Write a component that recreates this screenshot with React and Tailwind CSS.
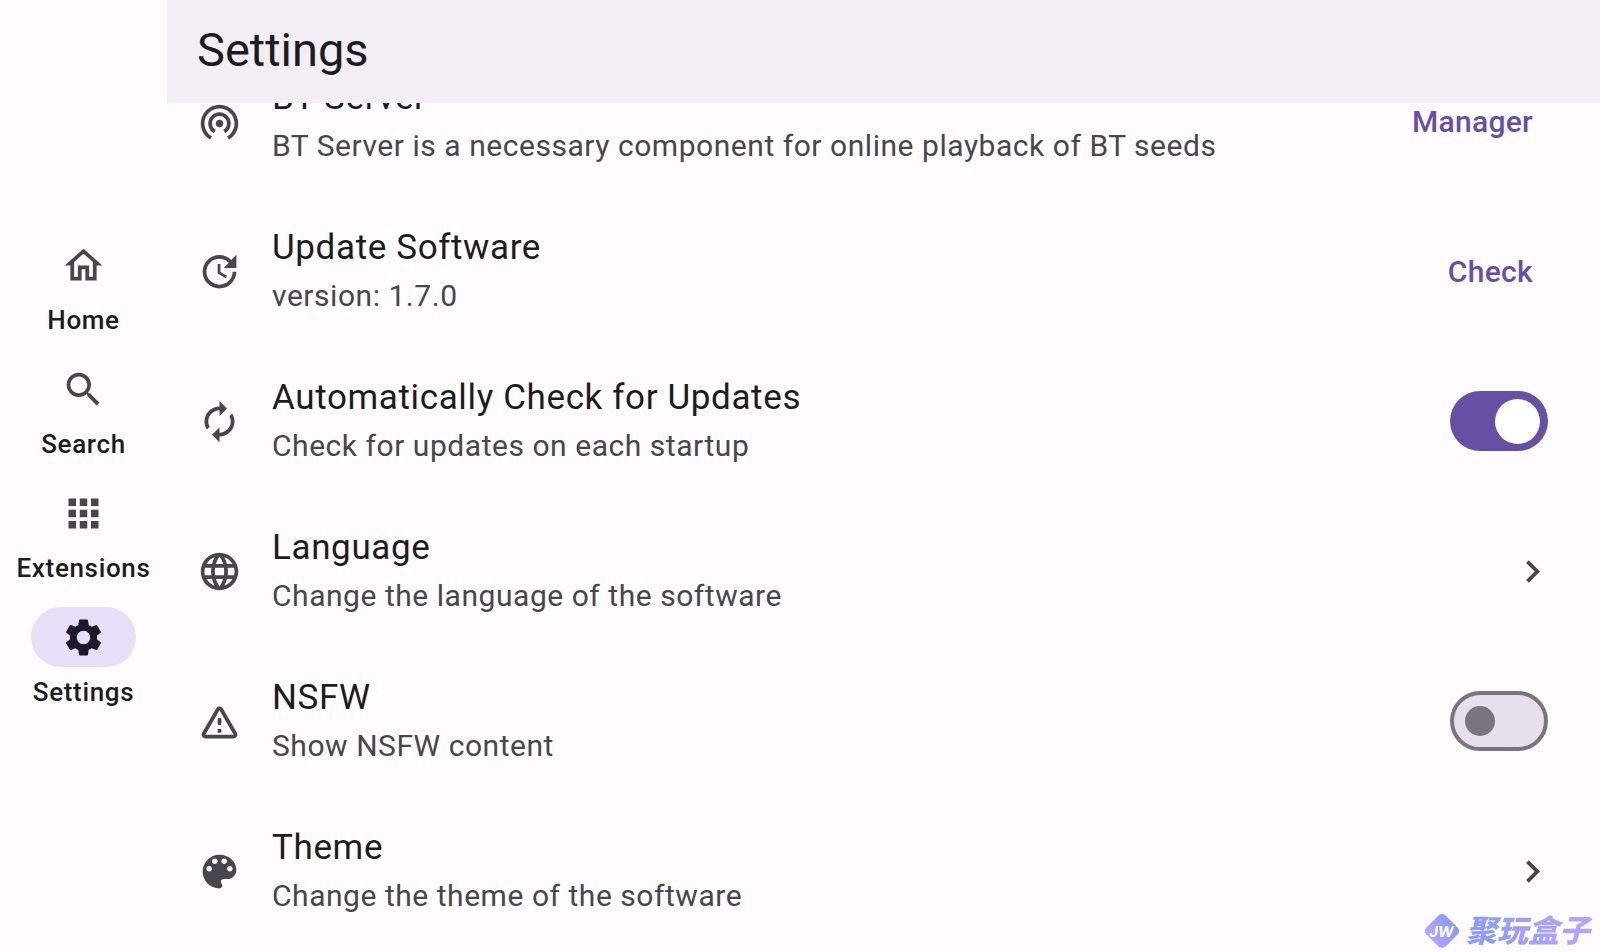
import { useState } from "react";
import {
  MdApps,
  MdAutorenew,
  MdChevronRight,
  MdLanguage,
  MdOutlineHome,
  MdSearch,
  MdSettings,
  MdUpdate,
  MdWifiTethering,
} from "react-icons/md";

function WarningIcon({ className }) {
  return (
    <svg viewBox="0 0 24 24" fill="currentColor" className={className} aria-hidden="true">
      <path d="M12 5.99L19.53 19H4.47L12 5.99M2.74 18c-.77 1.33.19 3 1.73 3h15.06c1.54 0 2.5-1.67 1.73-3L13.73 4.99c-.77-1.33-2.69-1.33-3.46 0L2.74 18zM11 11v2c0 .55.45 1 1 1s1-.45 1-1v-2c0-.55-.45-1-1-1s-1 .45-1 1zm0 5h2v2h-2z" />
    </svg>
  );
}

function PaletteIcon({ className }) {
  return (
    <svg viewBox="0 0 24 24" fill="currentColor" className={className} aria-hidden="true">
      <path d="M12 3c-4.97 0-9 4.03-9 9s4.03 9 9 9c.83 0 1.5-.67 1.5-1.5 0-.39-.15-.74-.39-1.01-.23-.26-.38-.61-.38-.99 0-.83.67-1.5 1.5-1.5H16c2.76 0 5-2.24 5-5 0-4.42-4.03-8-9-8zm-5.5 9c-.83 0-1.5-.67-1.5-1.5S5.67 9 6.5 9 8 9.67 8 10.5 7.33 12 6.5 12zm3-4C8.67 8 8 7.33 8 6.5S8.67 5 9.5 5s1.5.67 1.5 1.5S10.33 8 9.5 8zm5 0c-.83 0-1.5-.67-1.5-1.5S13.67 5 14.5 5s1.5.67 1.5 1.5S15.33 8 14.5 8zm3 4c-.83 0-1.5-.67-1.5-1.5S16.67 9 17.5 9s1.5.67 1.5 1.5-.67 1.5-1.5 1.5z" />
    </svg>
  );
}

const destinations = [
  { label: "Home", Icon: MdOutlineHome },
  { label: "Search", Icon: MdSearch },
  { label: "Extensions", Icon: MdApps },
  { label: "Settings", Icon: MdSettings, active: true },
];

function Rail() {
  return (
    <nav className="flex w-[167px] shrink-0 flex-col items-center justify-center gap-[22px] pb-2">
      {destinations.map(({ label, Icon, active }) => (
        <a
          key={label}
          href={"#" + label.toLowerCase()}
          aria-current={active ? "page" : undefined}
          className="flex flex-col items-center gap-2"
        >
          <span
            className={
              active
                ? "flex h-15 w-[105px] items-center justify-center rounded-full bg-[#e8def8] text-[#1d192b]"
                : "flex h-15 w-[105px] items-center justify-center rounded-full text-[#49454f]"
            }
          >
            <Icon className="size-[45px]" />
          </span>
          <span className="text-[26px] leading-[34px] font-medium tracking-wide">{label}</span>
        </a>
      ))}
    </nav>
  );
}

function Row({ Icon, title, subtitle, children }) {
  return (
    <li className="flex h-[150px] items-center gap-[30px] pr-[45px] pl-[30px]">
      <Icon className="size-[45px] shrink-0 text-[#49454f]" />
      <div className="min-w-0 flex-1">
        <h2 className="truncate text-[35px] leading-[50px] tracking-[0.018em]">{title}</h2>
        <p className="truncate text-[30px] leading-[46px] tracking-[0.018em] text-[#49454f]">{subtitle}</p>
      </div>
      {children}
    </li>
  );
}

function TextButton({ children }) {
  return (
    <button type="button" className="h-[75px] px-[22px] text-[30px] font-medium tracking-[0.01em] text-[#6750a4]">
      {children}
    </button>
  );
}

function Toggle({ label, initial }) {
  const [on, setOn] = useState(initial);
  return (
    <label className="mr-[7px] flex shrink-0 cursor-pointer">
      <input
        type="checkbox"
        role="switch"
        aria-label={label}
        checked={on}
        onChange={() => setOn(!on)}
        className="peer sr-only"
      />
      <span
        className={
          on
            ? "flex h-15 w-[98px] items-center justify-end rounded-full bg-[#6750a4] px-2"
            : "flex h-15 w-[98px] items-center rounded-full border-4 border-[#79747e] bg-[#e7e0ec] px-[11px]"
        }
      >
        <span className={on ? "size-[45px] rounded-full bg-white" : "size-[30px] rounded-full bg-[#79747e]"} />
      </span>
    </label>
  );
}

function LinkButton({ label }) {
  return (
    <button type="button" aria-label={label} className="shrink-0 text-[#49454f]">
      <MdChevronRight className="size-[45px]" />
    </button>
  );
}

function Brand() {
  return (
    <div className="absolute right-1 bottom-0 flex items-center gap-1.5">
      <svg viewBox="0 0 36 36" className="mt-1 size-9" aria-hidden="true">
        <defs>
          <linearGradient id="gem" x1="1" y1="0" x2="0.6" y2="1">
            <stop offset="0" stopColor="#7f9bfb" />
            <stop offset="1" stopColor="#b3a3fd" />
          </linearGradient>
        </defs>
        <rect x="4.5" y="4.5" width="27" height="27" rx="5" transform="rotate(45 18 18)" fill="url(#gem)" />
        <text
          x="17.5"
          y="23.5"
          textAnchor="middle"
          fill="#fff"
          className="font-[Inter,sans-serif] text-[15px] font-bold italic"
        >
          JW
        </text>
      </svg>
      <span className="bg-linear-to-r from-[#839bfb] to-[#bda5fd] bg-clip-text pr-1.5 font-['Noto_Sans_CJK_SC',sans-serif] text-[31px] leading-[46px] font-black text-transparent italic">
        聚玩盒子
      </span>
    </div>
  );
}

export default function App() {
  return (
    <div className="relative flex h-screen overflow-hidden bg-[#fffbff] font-[Roboto,sans-serif] text-[#1c1b1f]">
      <Rail />
      <main className="flex min-w-0 flex-1 flex-col">
        <header className="relative z-10 flex h-[103px] shrink-0 items-center bg-[#f3eef5] px-[30px] pb-1">
          <h1 className="text-[47px] leading-[60px]">Settings</h1>
        </header>
        <ul className="-mt-[57px]">
          <Row
            Icon={MdWifiTethering}
            title="BT Server"
            subtitle="BT Server is a necessary component for online playback of BT seeds"
          >
            <TextButton>Manager</TextButton>
          </Row>
          <Row Icon={MdUpdate} title="Update Software" subtitle="version: 1.7.0">
            <TextButton>Check</TextButton>
          </Row>
          <Row Icon={MdAutorenew} title="Automatically Check for Updates" subtitle="Check for updates on each startup">
            <Toggle label="Automatically Check for Updates" initial={true} />
          </Row>
          <Row Icon={MdLanguage} title="Language" subtitle="Change the language of the software">
            <LinkButton label="Language" />
          </Row>
          <Row Icon={WarningIcon} title="NSFW" subtitle="Show NSFW content">
            <Toggle label="NSFW" initial={false} />
          </Row>
          <Row Icon={PaletteIcon} title="Theme" subtitle="Change the theme of the software">
            <LinkButton label="Theme" />
          </Row>
        </ul>
      </main>
      <Brand />
    </div>
  );
}
